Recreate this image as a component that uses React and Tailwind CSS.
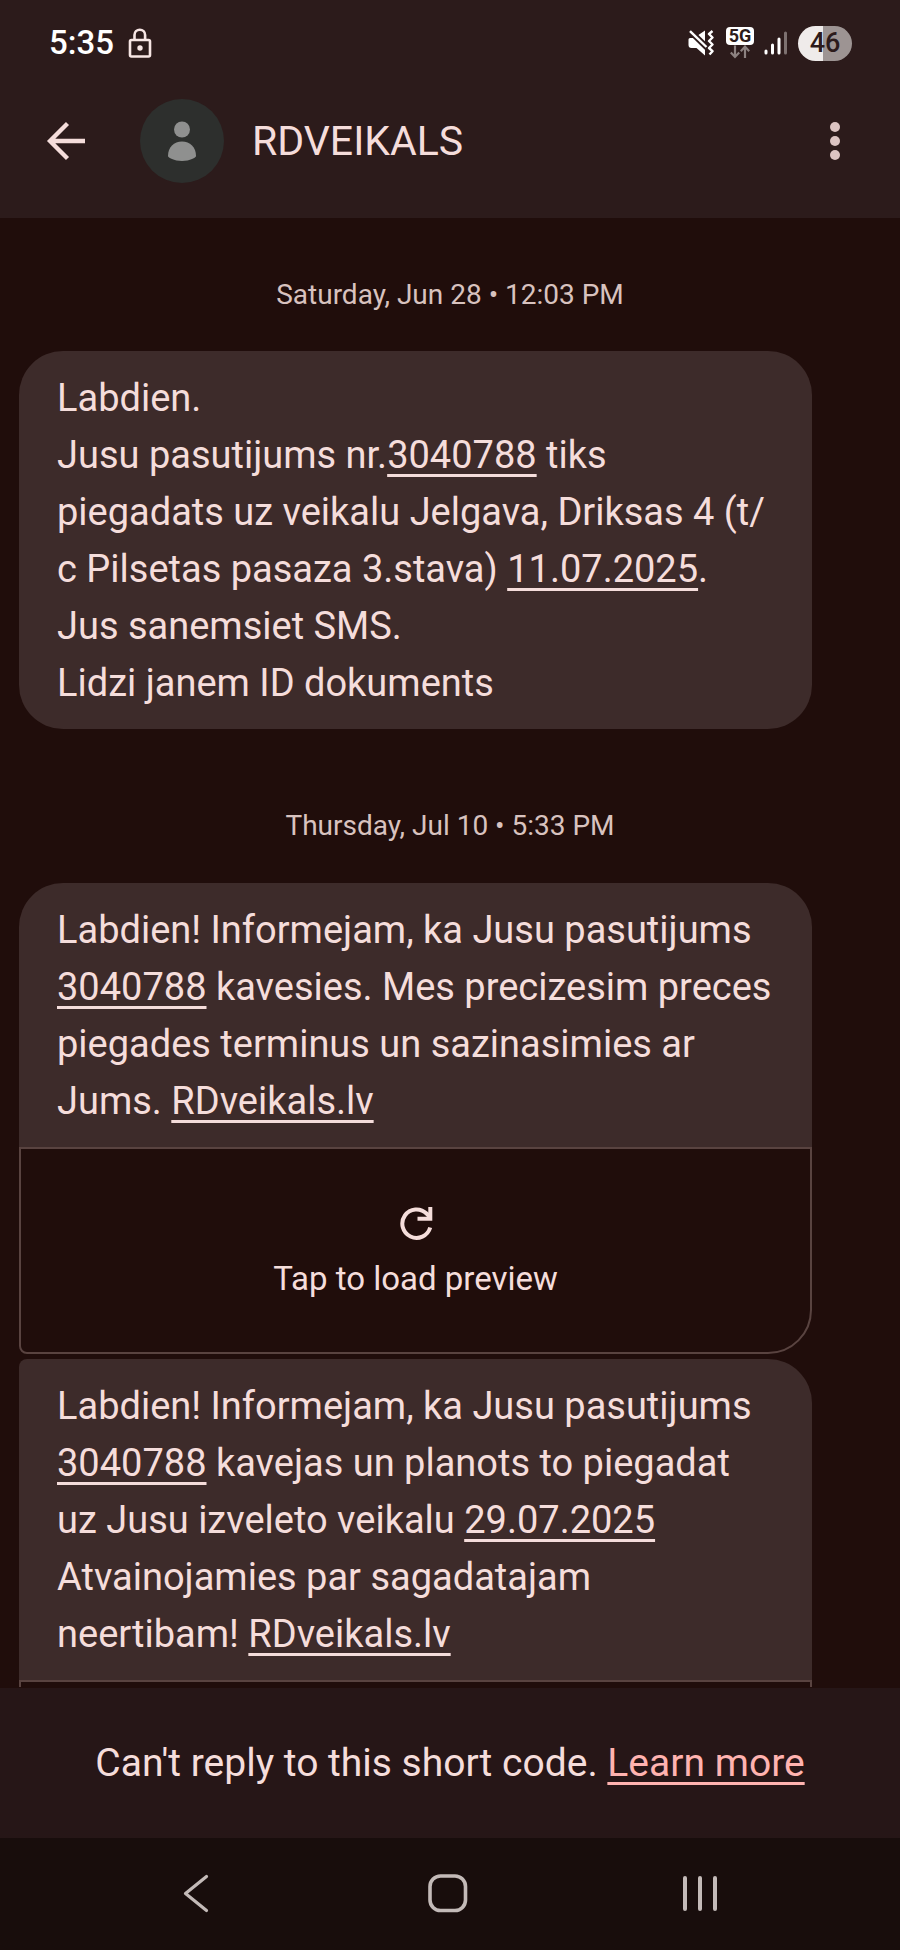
const FONT = "font-[Roboto,'Noto_Sans',sans-serif]";

function StatusBar() {
  return (
    <div className="flex h-[86px] items-center pl-[49px] pr-12 text-white">
      <span className="text-[33px] leading-10 font-medium">5:35</span>
      <svg className="ml-[14px] h-[30px] w-6" viewBox="0 0 24 30" fill="none" stroke="#f7e6e4" strokeWidth="2.6" aria-label="Locked">
        <rect x="2" y="12" width="20" height="16.5" rx="1.5" />
        <path d="M6.5 12V7a5.3 5.3 0 0 1 10.6 0v5" />
        <circle cx="12" cy="20" r="2.7" fill="#f7e6e4" stroke="none" />
      </svg>
      <div className="ml-auto flex items-center">
        <svg className="h-[26px] w-[26px]" viewBox="0 0 26 26" fill="none" aria-label="Vibrate">
          <path d="M0.5 9.5a1.500 1.500 0 0 1 1.500-1.500h4L17 0.5v25L8.5 18h-5a3 3 0 0 1-3-3z" fill="#fff" />
          <path d="M1 0 20 18.500" stroke="#2c1b1b" strokeWidth="6" />
          <path d="M2 1.200 18.500 17" stroke="#fff" strokeWidth="2.4" />
          <path d="M24.5 1 21 4l3.500 3.500L21 11l3.500 3.500L21 18l3.500 3.200L21.500 24.500" stroke="#fff" strokeWidth="2.4" strokeLinejoin="round" />
        </svg>
        <div className="ml-3 flex w-7 flex-col items-center">
          <span className="w-7 rounded-[4px] bg-white text-center text-[18px] leading-[18px] font-bold text-[#2c1b1b]">5G</span>
          <svg className="h-[14px] w-5" viewBox="0 0 20 14" fill="none" stroke="#8d8281" strokeWidth="2.2" aria-hidden="true">
            <path d="M5 0.5v11M0.8 7.5 5 12l4.2-4.500M15 13V2M10.8 6.2 15 1.6l4.2 4.6" />
          </svg>
        </div>
        <svg className="ml-[10px] h-6 w-6" viewBox="0 0 24 24" strokeWidth="3" strokeLinecap="round" aria-label="Signal">
          <path d="M2 20v2M8.5 14v8M15 8v14" stroke="#fff" />
          <path d="M21.5 2v20" stroke="#7d7170" />
        </svg>
        <span className="ml-[10px] flex h-[35px] w-[54px] items-center justify-center rounded-full bg-linear-to-r from-[#efebea] from-46% to-[#9d9493] to-46% text-[27px] leading-8 font-medium text-[#2c1b1b]">
          46
        </span>
      </div>
    </div>
  );
}

function AppBar() {
  return (
    <div className="flex h-[110px] items-center pl-[46px] pr-[55px] text-[#f5dddb]">
      <button aria-label="Back">
        <svg className="h-10 w-10" viewBox="0 0 40 40" fill="none" stroke="currentColor" strokeWidth="4.3">
          <path d="M39 20H4M21.5 2.5 4 20l17.5 17.500" />
        </svg>
      </button>
      <svg className="ml-[54px] size-[84px]" viewBox="0 0 84 84" aria-hidden="true">
        <circle cx="42" cy="42" r="42" fill="#2d2f2d" />
        <circle cx="42" cy="30.5" r="8" fill="#8f908f" />
        <path d="M28 57c0-9 6-14.500 14-14.500S56 48 56 57c0 1.500-6 5-14 5s-14-3.500-14-5z" fill="#8f908f" />
      </svg>
      <h1 className="ml-7 text-[41px] leading-[52px]">RDVEIKALS</h1>
      <button aria-label="More options" className="ml-auto">
        <svg className="h-10 w-5" viewBox="0 0 20 40" fill="#dcc4c2">
          <circle cx="10" cy="6" r="5" />
          <circle cx="10" cy="20" r="5" />
          <circle cx="10" cy="34" r="5" />
        </svg>
      </button>
    </div>
  );
}

function DateLine({ children }) {
  return <p className="text-center text-[28px] leading-10 text-[#d8c2bf]">{children}</p>;
}

function TextLink({ children }) {
  return (
    <a href="#" className="underline decoration-3 underline-offset-6">
      {children}
    </a>
  );
}

function Bubble({ className = "", children }) {
  return (
    <div className={"bg-[#3d2b2a] px-[38px] pt-[19px] pb-[17px] text-[38px] leading-[57px] text-[#f5dddb] " + className}>
      {children}
    </div>
  );
}

function Preview() {
  return (
    <button className="flex h-[207px] w-full flex-col items-center rounded-br-[44px] rounded-bl-lg border-2 border-[#594340] pt-14 text-[#f5dddb]">
      <svg className="size-9" viewBox="0 0 36 36" fill="none" stroke="currentColor" strokeWidth="4">
        <path d="M32.2 22.5A14.2 14.2 0 1 1 28.5 8.5L32 12" />
        <path d="M32.3 2v11.8H19.5" />
      </svg>
      <span className="mt-4 text-[33px] leading-[44px]">Tap to load preview</span>
    </button>
  );
}

export default function App() {
  return (
    <div className={"flex h-screen flex-col bg-[#200d0b] " + FONT}>
      <header className="shrink-0 bg-[#2c1b1b] pb-[22px]">
        <StatusBar />
        <AppBar />
      </header>

      <main className="min-h-0 flex-1 overflow-y-auto pt-[57px] [scrollbar-width:none]">
        <DateLine>Saturday, Jun 28 • 12:03 PM</DateLine>
        <section className="mt-9 mr-[88px] ml-[19px]">
          <Bubble className="rounded-[44px]">
            Labdien.
            <br />
            Jusu pasutijums nr.<TextLink>3040788</TextLink> tiks
            <br />
            piegadats uz veikalu Jelgava, Driksas 4 (t/
            <br />c Pilsetas pasaza 3.stava) <TextLink>11.07.2025</TextLink>.
            <br />
            Jus sanemsiet SMS.
            <br />
            Lidzi janem ID dokuments
          </Bubble>
        </section>

        <div className="mt-[77px]">
          <DateLine>Thursday, Jul 10 • 5:33 PM</DateLine>
        </div>
        <section className="mt-[37px] mr-[88px] ml-[19px] flex flex-col gap-[5px]">
          <article>
            <Bubble className="rounded-t-[44px]">
              Labdien! Informejam, ka Jusu pasutijums
              <br />
              <TextLink>3040788</TextLink> kavesies. Mes precizesim preces
              <br />
              piegades terminus un sazinasimies ar
              <br />
              Jums. <TextLink>RDveikals.lv</TextLink>
            </Bubble>
            <Preview />
          </article>
          <article>
            <Bubble className="rounded-tl-lg rounded-tr-[44px]">
              Labdien! Informejam, ka Jusu pasutijums
              <br />
              <TextLink>3040788</TextLink> kavejas un planots to piegadat
              <br />
              uz Jusu izveleto veikalu <TextLink>29.07.2025</TextLink>
              <br />
              Atvainojamies par sagadatajam
              <br />
              neertibam! <TextLink>RDveikals.lv</TextLink>
            </Bubble>
            <div className="h-[7px] border-x-2 border-t-2 border-[#594340]" />
          </article>
        </section>
      </main>

      <footer className="flex h-[150px] shrink-0 items-center justify-center bg-[#261617] text-[39px] leading-[57px] text-[#f5dddb]">
        <p>
          Can't reply to this short code.{" "}
          <a href="#" className="text-[#ffb3b0] underline decoration-3 underline-offset-6">
            Learn more
          </a>
        </p>
      </footer>

      <nav className="grid h-28 shrink-0 grid-cols-3 items-center bg-[#180d0c] pr-[74px] pl-[70px] text-[#c3bab8]">
        <button aria-label="Back" className="flex justify-center">
          <svg className="size-10" viewBox="0 0 40 40" fill="none" stroke="currentColor" strokeWidth="3.2" strokeLinecap="round" strokeLinejoin="round">
            <path d="M30.5 2.5 9.5 19.5 30.5 36.5" />
          </svg>
        </button>
        <button aria-label="Home" className="flex justify-center">
          <svg className="size-10" viewBox="0 0 40 40" fill="none" stroke="currentColor" strokeWidth="3.6">
            <rect x="2" y="2" width="35.5" height="34.5" rx="10.5" />
          </svg>
        </button>
        <button aria-label="Recent apps" className="flex justify-center">
          <svg className="size-10" viewBox="0 0 40 40" fill="none" stroke="currentColor" strokeWidth="4" strokeLinecap="round">
            <path d="M5 4v31M20 4v31M35 4v31" />
          </svg>
        </button>
      </nav>
    </div>
  );
}
